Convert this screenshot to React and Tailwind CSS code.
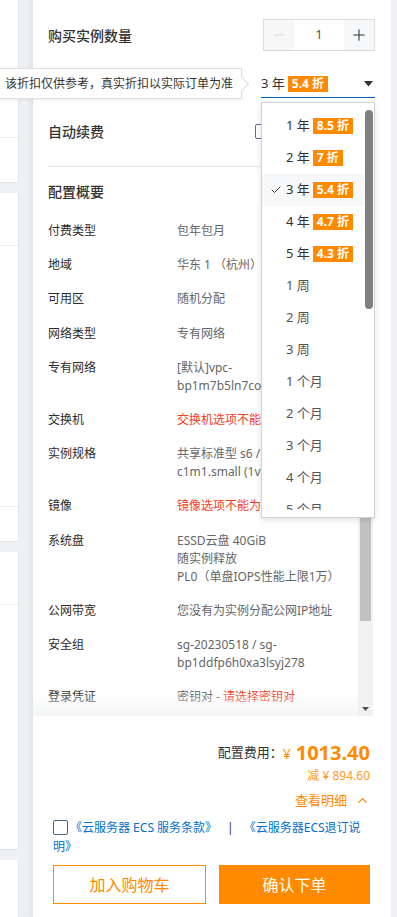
import React from 'react';
import { Minus, Plus, ChevronUp, Check } from 'lucide-react';

const options = [
    { t: '1 年', d: '8.5 折' },
    { t: '2 年', d: '7 折' },
    { t: '3 年', d: '5.4 折', sel: true },
    { t: '4 年', d: '4.7 折' },
    { t: '5 年', d: '4.3 折' },
    { t: '1 周' },
    { t: '2 周' },
    { t: '3 周' },
    { t: '1 个月' },
    { t: '2 个月' },
    { t: '3 个月' },
    { t: '4 个月' },
    { t: '5 个月' },
];

const rows = [
    { k: '付费类型', v: ['包年包月'] },
    { k: '地域', v: ['华东 1 （杭州）'] },
    { k: '可用区', v: ['随机分配'] },
    { k: '网络类型', v: ['专有网络'] },
    { k: '专有网络', v: ['[默认]vpc-bp1m7b5ln7copq2hxt0kd'] },
    { k: '交换机', v: ['交换机选项不能为空'], red: true },
    { k: '实例规格', v: ['共享标准型 s6 / ecs.s6-c1m1.small (1vCPU 1GiB)'] },
    { k: '镜像', v: ['镜像选项不能为空'], red: true },
    { k: '系统盘', v: ['ESSD云盘 40GiB', '随实例释放', 'PL0（单盘IOPS性能上限1万）'] },
    { k: '公网带宽', v: ['您没有为实例分配公网IP地址'] },
    { k: '安全组', v: ['sg-20230518 / sg-bp1ddfp6h0xa3lsyj278'] },
    { k: '登录凭证', key: true },
];

const Badge = ({ children }) => (
    <span className="inline-block bg-[#ff8a00] text-white font-bold text-[12px] leading-[16px] px-[4px] ml-[3px]">
        {children}
    </span>
);

const LeftCards = () => (
    <div className="w-[19px] shrink-0 flex flex-col">
        <div className="h-[183px] bg-white border-r border-b border-[#e3e5e8] flex flex-col">
            <div className="h-[138px] border-b border-[#ececec]" />
        </div>
        <div className="h-[349px] mt-[10px] bg-white border-r border-b border-[#e3e5e8] flex flex-col">
            <div className="h-[53px] border-b border-[#ececec]" />
            <div className="h-[211px]" />
            <div className="h-[50px] border-b border-[#ececec]" />
        </div>
        <div className="h-[298px] mt-[10px] bg-white border-r border-b border-[#e3e5e8] flex flex-col">
            <div className="h-[53px] border-b border-[#ececec]" />
        </div>
        <div className="flex-1 mt-[10px] bg-white border-r border-[#e3e5e8]" />
    </div>
);

const Dropdown = () => (
    <div className="absolute left-[228px] top-[102px] w-[114px] h-[416px] bg-white border border-[#cfd2d6] shadow-[0_2px_6px_rgba(0,0,0,0.12)] flex pt-[7px] pb-[7px] z-30">
        <div className="flex-1 overflow-hidden">
            {options.map((o) => (
                <div
                    key={o.t}
                    className={`h-[32px] flex items-center pl-[8px] text-[13px] whitespace-nowrap ${o.sel ? 'bg-[#f7f8fa]' : ''} ${o.d ? 'text-[#333]' : 'text-[#555]'}`}
                >
                    <span className="w-[16px] flex items-center">
                        {o.sel && <Check size={12} strokeWidth={2} className="text-[#333]" />}
                    </span>
                    <span>{o.t}</span>
                    {o.d && <Badge>{o.d}</Badge>}
                </div>
            ))}
        </div>
        <div className="w-[9px] flex flex-col">
            <div className="w-[8px] h-[199px] rounded-full bg-[#808080]" />
        </div>
    </div>
);

const Tooltip = () => (
    <div className="absolute right-[149px] top-[68px] h-[31px] pl-[40px] pr-[8px] bg-white border border-[#dcdfe3] shadow-[0_1px_4px_rgba(0,0,0,0.08)] flex items-center text-[12px] text-[#333] whitespace-nowrap z-30">
        该折扣仅供参考，真实折扣以实际订单为准
        <span className="absolute right-[-6px] top-[10px] w-[10px] h-[10px] bg-white border-t border-r border-[#dcdfe3] rotate-45" />
    </div>
);

const ConfigRow = ({ row }) => (
    <div className="flex text-[12px] leading-[18px]">
        <div className="w-[129px] shrink-0 text-[#2b2b2b]">{row.k}</div>
        <div className={`w-[170px] break-words ${row.red ? 'text-[#f5401f]' : 'text-[#666]'}`}>
            {row.key ? (
                <span>
                    密钥对 - <span className="text-[#f5401f]">请选择密钥对</span>
                </span>
            ) : (
                row.v.map((line) => <div key={line}>{line}</div>)
            )}
        </div>
    </div>
);

export default function App() {
    return (
        <div className="w-[397px] h-[917px] overflow-hidden bg-[#eff0f3] flex font-['Noto_Sans','Noto_Sans_CJK_SC',sans-serif]">
            <LeftCards />
            <div className="w-[14px] shrink-0" />
            <div className="relative w-[358px] shrink-0 h-full bg-white flex flex-col shadow-[-3px_0_5px_rgba(0,0,0,0.06)] z-10">
                {/* header */}
                <div className="pl-[15px] pr-[16px] pt-[19px]">
                    <div className="flex items-center justify-between">
                        <span className="text-[14px] font-medium text-[#333]">购买实例数量</span>
                        <div className="flex h-[32px] border border-[#dcdcdc]">
                            <button className="w-[30px] bg-[#f7f7f7] flex items-center justify-center text-[#cfcfcf]">
                                <Minus size={16} strokeWidth={1.2} />
                            </button>
                            <div className="w-[50px] bg-white flex items-center justify-center text-[13px] text-[#555]">1</div>
                            <button className="w-[30px] bg-[#f7f8fa] flex items-center justify-center text-[#333]">
                                <Plus size={18} strokeWidth={1.4} />
                            </button>
                        </div>
                    </div>
                    <div className="mt-[20px] flex items-center justify-between">
                        <span className="text-[14px] font-medium text-[#333]">购买时长</span>
                        <div className="w-[114px] h-[27px] border-b-[1.5px] border-[#0064c8] flex items-center justify-between text-[13px] text-[#333]">
                            <span className="flex items-center">
                                3 年<Badge>5.4 折</Badge>
                            </span>
                            <svg width="9" height="6" viewBox="0 0 9 6" className="mr-[2px]">
                                <path d="M0 0 L9 0 L4.5 5.5 Z" fill="#333" />
                            </svg>
                        </div>
                    </div>
                    <div className="mt-[21px] h-[24px] flex items-center">
                        <span className="text-[14px] font-medium text-[#333]">自动续费</span>
                        <div className="ml-auto w-[120px] flex items-center gap-[6px] text-[12px] text-[#555]">
                            <span className="w-[15px] h-[15px] border border-[#55708f] rounded-[2px] bg-white" />
                            到期自动续费
                        </div>
                    </div>
                    <div className="mt-[23px] border-t border-[#e8e8e8]" />
                </div>

                {/* config summary */}
                <div className="relative flex-1 flex min-h-0">
                    <div className="flex-1 pl-[15px] pt-[15px] overflow-hidden">
                        <div className="text-[14px] font-medium text-[#333] leading-[20px] mb-[20px]">配置概要</div>
                        <div className="flex flex-col gap-[16.2px]">
                            {rows.map((r) => (
                                <ConfigRow key={r.k} row={r} />
                            ))}
                        </div>
                    </div>
                    <div className="w-[15px] mr-[18px] bg-[#f1f1f1] flex flex-col">
                        <div className="h-[15px] flex items-center justify-center">
                            <svg width="7" height="4" viewBox="0 0 7 4">
                                <path d="M0 4 L7 4 L3.5 0 Z" fill="#505050" />
                            </svg>
                        </div>
                        <div className="flex-1 px-[2px] pt-[2px]">
                            <div className="h-[437px] bg-[#c1c1c1]" />
                        </div>
                        <div className="h-[15px] flex items-center justify-center">
                            <svg width="7" height="4" viewBox="0 0 7 4">
                                <path d="M0 0 L7 0 L3.5 4 Z" fill="#505050" />
                            </svg>
                        </div>
                    </div>
                    <div className="absolute left-0 right-[33px] bottom-0 h-[24px] bg-gradient-to-b from-white/0 to-[#f4f5f6] pointer-events-none" />
                </div>

                {/* footer */}
                <div className="h-[201px] shrink-0 pl-[20px] pr-[21px] pt-[23px]">
                    <div className="flex items-center justify-end h-[28px]">
                        <span className="text-[13px] text-[#333]">配置费用：</span>
                        <span className="text-[14px] text-[#ff8a00] mr-[5px]">¥</span>
                        <span className="text-[20px] font-bold text-[#ff8a00] leading-[28px]">1013.40</span>
                    </div>
                    <div className="mt-[1px] text-right text-[12px] leading-[16px] text-[#ff9a26]">减 ¥ 894.60</div>
                    <div className="mt-[7px] flex items-center justify-end gap-[8px] text-[13px] leading-[18px] text-[#ff8a00]">
                        查看明细
                        <ChevronUp size={15} strokeWidth={2} />
                    </div>
                    <p className="mt-[9px] text-[12px] leading-[19px] text-[#0070cc]">
                        <span className="inline-block align-[-3px] w-[15px] h-[15px] border border-[#4a6482] rounded-[2px] mr-[2px]" />
                        《云服务器 ECS 服务条款》
                        <span className="text-[#333] mx-[10px]">|</span>
                        《云服务器ECS退订说明》
                    </p>
                    <div className="mt-[9px] flex gap-[13px]">
                        <button className="flex-1 h-[39px] border border-[#ff8a00] text-[#ff8a00] text-[16px] bg-white">加入购物车</button>
                        <button className="flex-1 h-[39px] bg-[#ff8a00] text-white text-[16px]">确认下单</button>
                    </div>
                </div>

                <Tooltip />
                <Dropdown />
            </div>
            <div className="flex-1" />
        </div>
    );
}
